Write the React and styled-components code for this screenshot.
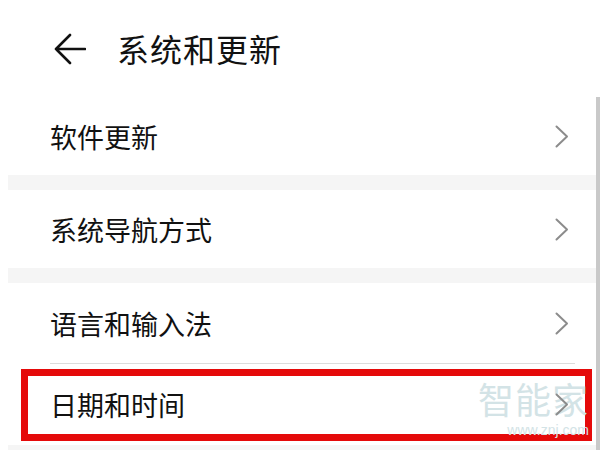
import React from 'react';
import styled, { createGlobalStyle } from 'styled-components';

const GlobalStyle = createGlobalStyle`
  html, body {
    margin: 0;
    padding: 0;
    background: #ffffff;
  }
  body {
    font-family: "Noto Sans CJK SC", "Noto Sans", sans-serif;
  }
`;

const Page = styled.div`
  display: flex;
  flex-direction: column;
  width: 600px;
  height: 450px;
  overflow: hidden;
  background: #ffffff;
`;

const Header = styled.div`
  display: flex;
  align-items: center;
  height: 97px;
  flex-shrink: 0;
  padding-left: 54px;
  gap: 31px;
  box-sizing: border-box;
`;

const Title = styled.h1`
  margin: 0;
  font-size: 32px;
  font-weight: 400;
  color: #111111;
  letter-spacing: 1px;
  line-height: 1;
  padding-bottom: 2px;
`;

const Content = styled.div`
  display: flex;
  flex-direction: column;
  flex: 1;
  padding-left: 8px;
  border-right: 4px solid #c9c9c9;
`;

const Section = styled.div`
  display: flex;
  flex-direction: column;
  background: #ffffff;
`;

const Band = styled.div`
  height: 15px;
  flex-shrink: 0;
  background: #f5f5f5;
`;

const Row = styled.div`
  display: flex;
  align-items: center;
  justify-content: space-between;
  height: ${(p) => p.$h}px;
  padding: 0 27px 0 42px;
  flex-shrink: 0;
`;

const Label = styled.span`
  font-size: 27px;
  color: #111111;
  line-height: 1;
`;

const Divider = styled.div`
  height: 1px;
  background: #dcdcdc;
  margin: 0 21px 0 42px;
`;

const HighlightWrap = styled.div`
  padding: 5px 4px 4px 13px;
  flex-shrink: 0;
`;

const Highlight = styled.div`
  position: relative;
  display: flex;
  align-items: center;
  justify-content: space-between;
  height: 72px;
  box-sizing: border-box;
  border: 7px solid #e50a0a;
  padding: 0 16px 2px 22px;
`;

const Watermark = styled.div`
  position: absolute;
  right: -4px;
  top: 4px;
  display: flex;
  flex-direction: column;
  align-items: flex-end;
  pointer-events: none;
`;

const MarkBig = styled.span`
  font-size: 36px;
  line-height: 36px;
  height: 36px;
  color: #d3e3e6;
  letter-spacing: 1px;
`;

const MarkSmall = styled.span`
  font-family: "Liberation Sans", sans-serif;
  font-size: 14px;
  line-height: 14px;
  color: #d3e3e6;
  margin-top: 7px;
`;

const BackArrow = () => (
  <svg width="32" height="32" viewBox="0 0 32 32" fill="none">
    <path d="M16 2 L2 16 L16 30 M2 16 H31" stroke="#111" strokeWidth="2.6" strokeLinecap="round" strokeLinejoin="round" />
  </svg>
);

const Chevron = () => (
  <svg width="14" height="23" viewBox="0 0 14 23" fill="none" style={{ position: 'relative', zIndex: 1 }}>
    <polyline points="1.5,1.5 12,11.5 1.5,21.5" stroke="#8c8c8c" strokeWidth="2" strokeLinecap="round" strokeLinejoin="round" />
  </svg>
);

export default function App() {
  return (
    <Page>
      <GlobalStyle />
      <Header>
        <BackArrow />
        <Title>系统和更新</Title>
      </Header>
      <Content>
        <Section>
          <Row $h={78}>
            <Label>软件更新</Label>
            <Chevron />
          </Row>
        </Section>
        <Band />
        <Section>
          <Row $h={78}>
            <Label>系统导航方式</Label>
            <Chevron />
          </Row>
        </Section>
        <Band />
        <Section>
          <Row $h={80}>
            <Label>语言和输入法</Label>
            <Chevron />
          </Row>
          <Divider />
          <HighlightWrap>
            <Highlight>
              <Label>日期和时间</Label>
              <Watermark>
                <MarkBig>智能家</MarkBig>
                <MarkSmall>www.znj.com</MarkSmall>
              </Watermark>
              <Chevron />
            </Highlight>
          </HighlightWrap>
        </Section>
        <Band />
      </Content>
    </Page>
  );
}
